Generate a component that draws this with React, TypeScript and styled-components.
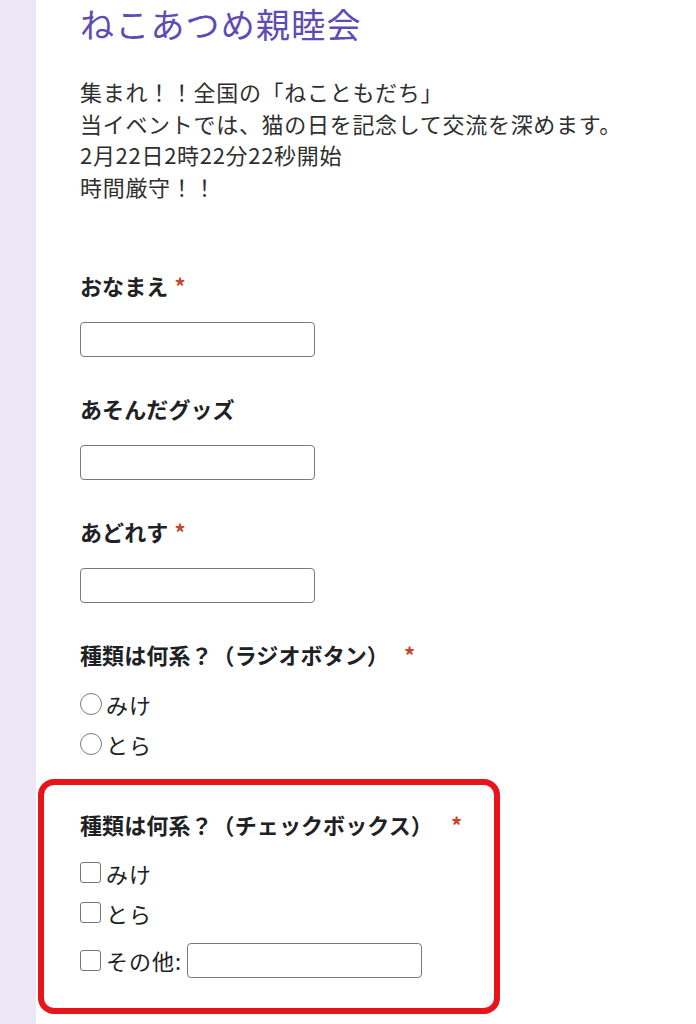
import React from 'react';
import styled, { createGlobalStyle } from 'styled-components';

const GlobalStyle = createGlobalStyle`
  html, body {
    margin: 0;
    padding: 0;
    background: #ebe7f5;
  }
  body {
    font-family: "Noto Sans CJK JP", "Noto Sans", sans-serif;
    color: #202124;
  }
`;

const Page = styled.div`
  display: flex;
  min-height: 1024px;
  overflow: hidden;
`;

const Card = styled.main`
  margin-left: 36px;
  flex: 1;
  background: #ffffff;
  padding: 0 0 0 44px;
`;

const Title = styled.h1`
  margin: 0;
  font-size: 34px;
  line-height: 48px;
  font-weight: 400;
  color: #5f4bb6;
  letter-spacing: 1.2px;
`;

const Description = styled.p`
  margin: 28px 0 66px;
  font-size: 22px;
  line-height: 31.7px;
  color: #2f2f2f;
  letter-spacing: 0.7px;
`;

const Question = styled.div<{ $after?: number }>`
  margin-bottom: ${p => p.$after ?? 35}px;
`;

const Label = styled.div`
  font-size: 22px;
  line-height: 32px;
  font-weight: 700;
  color: #202124;
  letter-spacing: 0.1px;
`;

const Star = styled.span<{ $gap?: number }>`
  color: #c4472c;
  font-weight: 700;
  margin-left: ${p => p.$gap ?? 6}px;
`;

const TextInput = styled.input`
  display: block;
  box-sizing: border-box;
  width: 235px;
  height: 35px;
  margin-top: 21px;
  border: 1.5px solid #7a7a7a;
  border-radius: 4px;
  background: #fff;
`;

const Options = styled.div<{ $top: number }>`
  margin-top: ${p => p.$top}px;
  display: flex;
  flex-direction: column;
`;

const Option = styled.label`
  display: flex;
  align-items: center;
  height: 40px;
  font-size: 22px;
  color: #202124;
  letter-spacing: 1px;
`;

const OtherOption = styled(Option)`
  height: 35px;
  margin-top: 10px;
`;

const RadioMark = styled.span`
  box-sizing: border-box;
  width: 22px;
  height: 22px;
  border: 1.5px solid #7c7c7c;
  border-radius: 50%;
  margin-right: 4px;
`;

const CheckMark = styled.span`
  box-sizing: border-box;
  width: 21px;
  height: 21px;
  border: 1.5px solid #767676;
  border-radius: 3px;
  margin-right: 5px;
`;

const OtherInput = styled.input`
  box-sizing: border-box;
  width: 235px;
  height: 35px;
  margin-left: 5px;
  border: 1.5px solid #7a7a7a;
  border-radius: 4px;
  background: #fff;
`;

const Highlight = styled.section`
  box-sizing: border-box;
  width: 462px;
  margin-left: -42px;
  border: 6px solid #e8141a;
  border-radius: 16px;
  padding: 23px 0 30px 36px;
`;

export default function App() {
  return (
    <>
      <GlobalStyle />
      <Page>
        <Card>
          <Title>ねこあつめ親睦会</Title>
          <Description>
            集まれ！！全国の「ねこともだち」
            <br />
            当イベントでは、猫の日を記念して交流を深めます。
            <br />
            2月22日2時22分22秒開始
            <br />
            時間厳守！！
          </Description>

          <Question>
            <Label>
              おなまえ<Star>*</Star>
            </Label>
            <TextInput type="text" />
          </Question>

          <Question>
            <Label>あそんだグッズ</Label>
            <TextInput type="text" />
          </Question>

          <Question>
            <Label>
              あどれす<Star>*</Star>
            </Label>
            <TextInput type="text" />
          </Question>

          <Question $after={15}>
            <Label>
              種類は何系？（ラジオボタン）<Star $gap={15}>*</Star>
            </Label>
            <Options $top={14}>
              <Option>
                <RadioMark />
                みけ
              </Option>
              <Option>
                <RadioMark />
                とら
              </Option>
            </Options>
          </Question>

          <Highlight>
            <Label>
              種類は何系？（チェックボックス）<Star $gap={18}>*</Star>
            </Label>
            <Options $top={13}>
              <Option>
                <CheckMark />
                みけ
              </Option>
              <Option>
                <CheckMark />
                とら
              </Option>
              <OtherOption>
                <CheckMark />
                その他:
                <OtherInput type="text" />
              </OtherOption>
            </Options>
          </Highlight>
        </Card>
      </Page>
    </>
  );
}
